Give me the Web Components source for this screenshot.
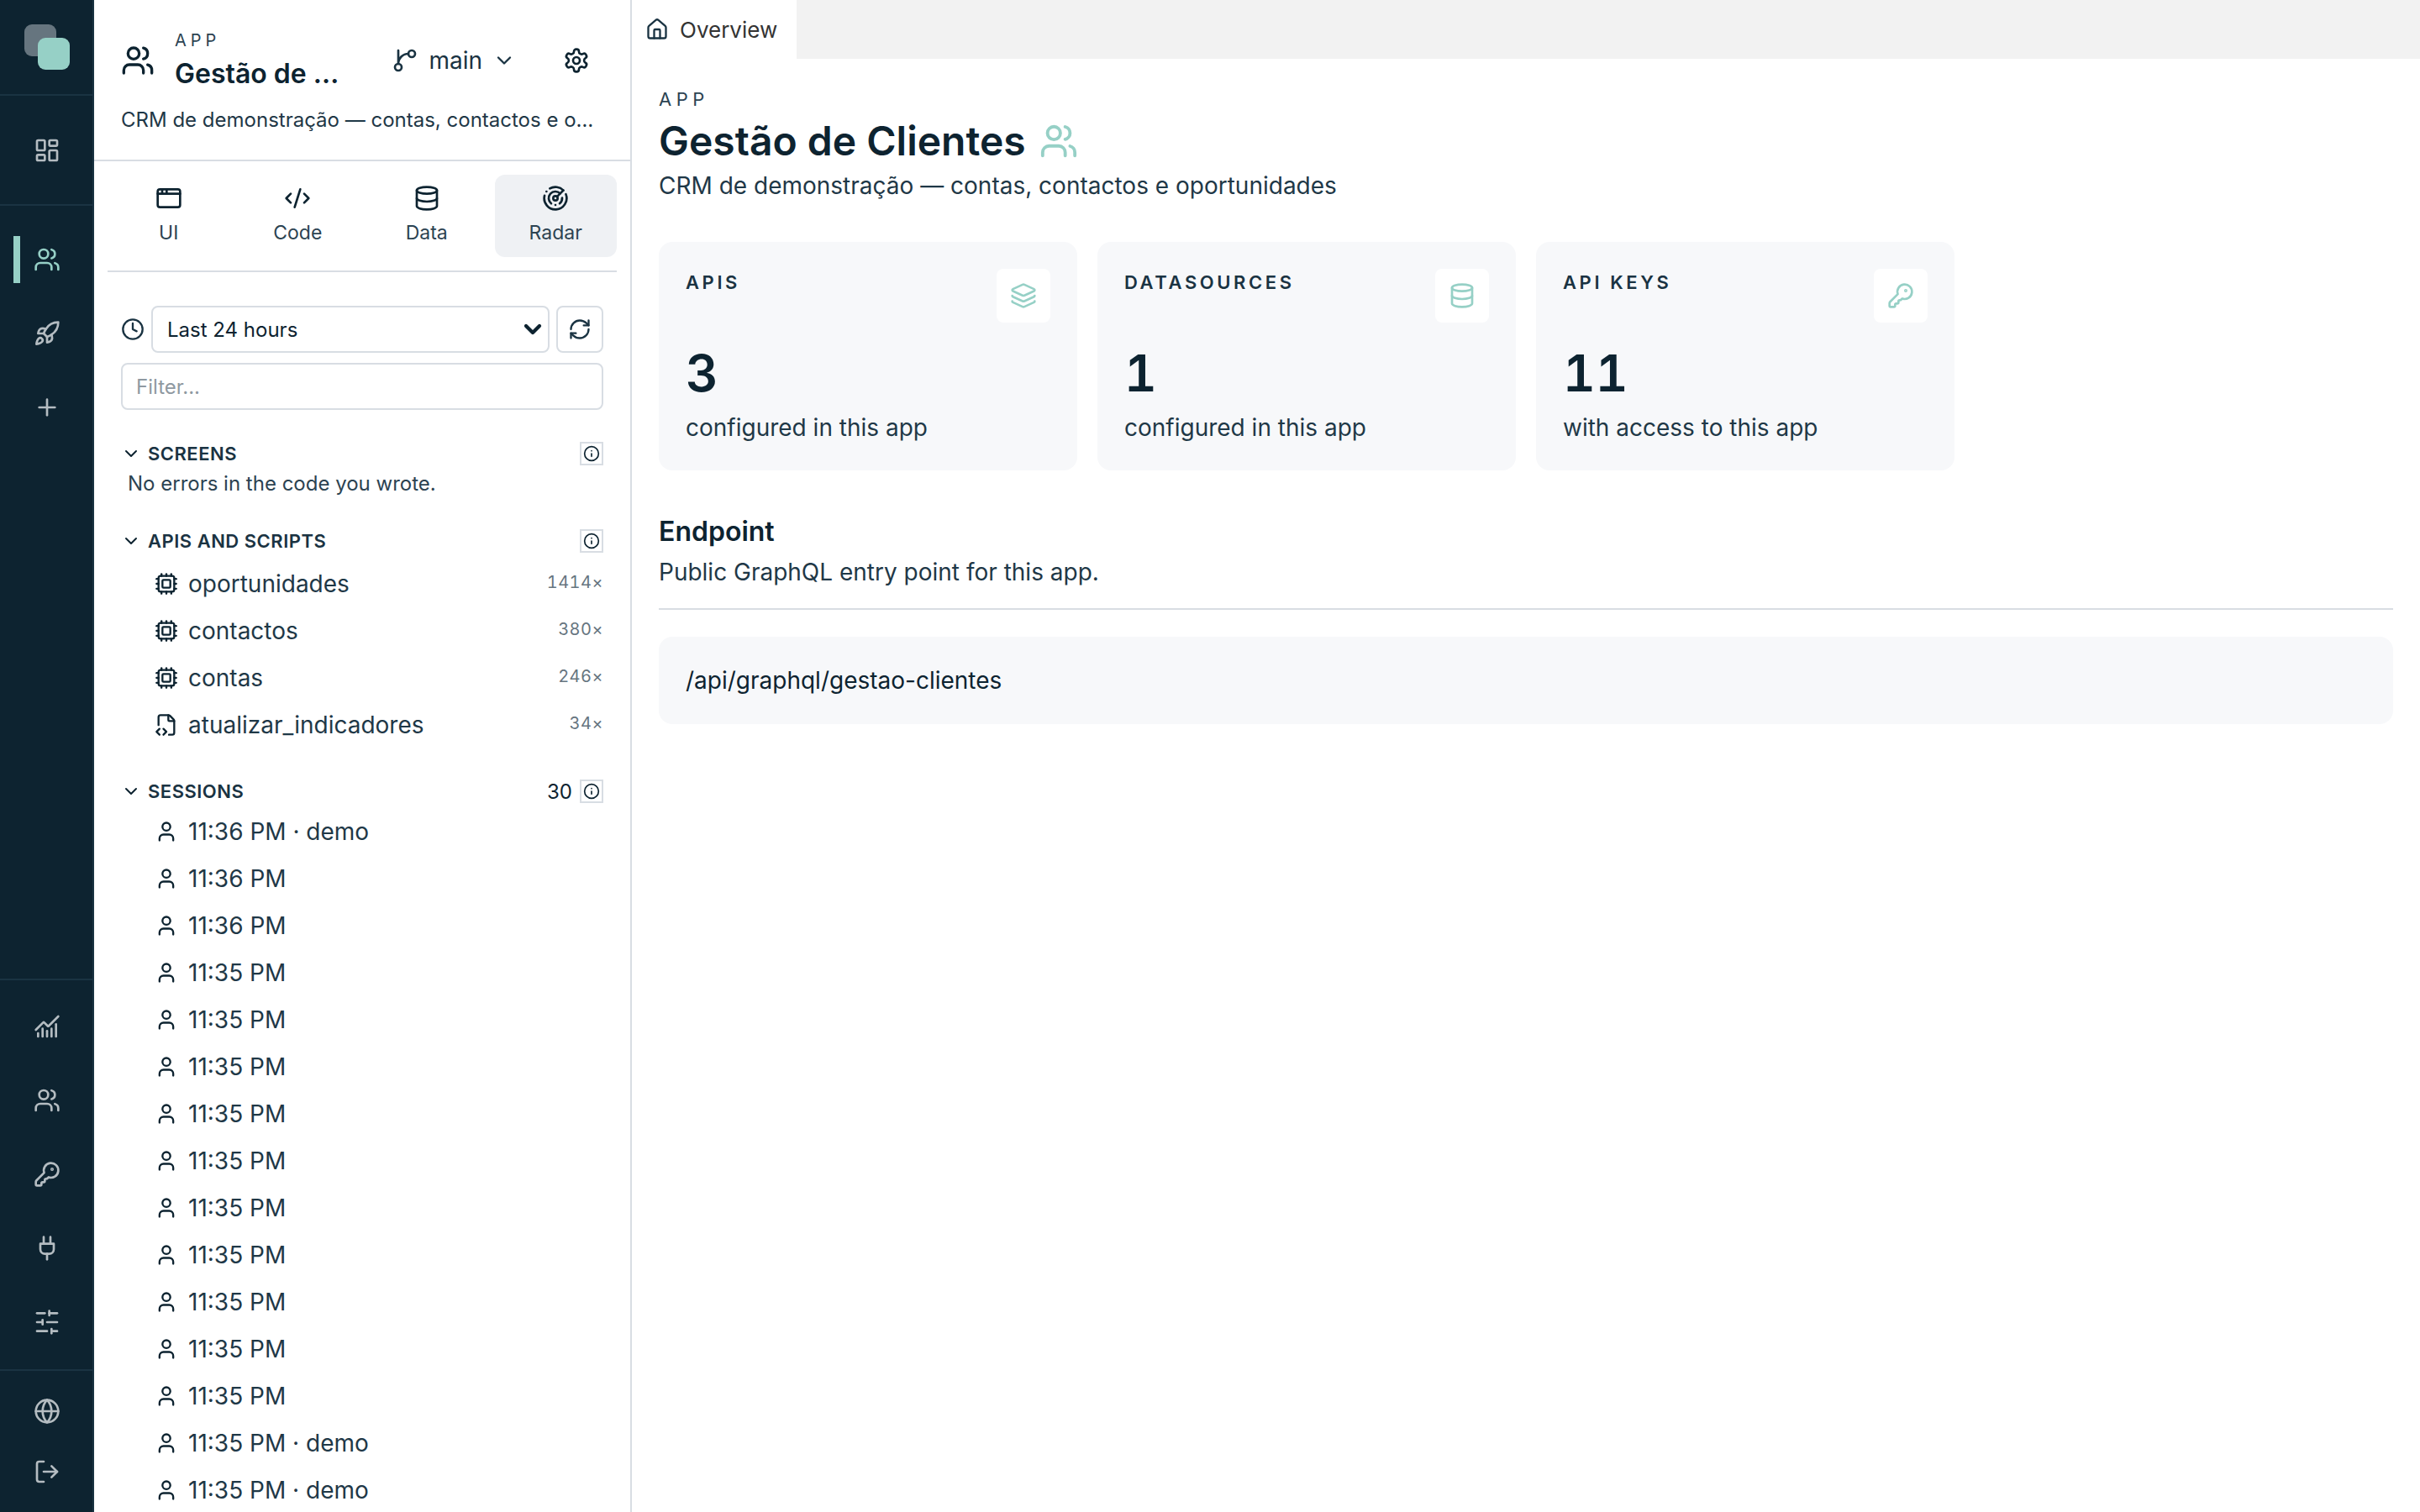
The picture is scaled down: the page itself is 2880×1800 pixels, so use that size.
<!DOCTYPE html>
<html lang="pt">
<head>
<meta charset="utf-8">
<title>Gestão de Clientes</title>
<style>
  html, body { margin: 0; height: 100%; background: #fff; }
  body {
    display: flex;
    height: 1800px;
    overflow: hidden;
    font-family: Inter, "Liberation Sans", sans-serif;
    color: #0d2330;
  }
</style>
</head>
<body>
<app-rail></app-rail>
<app-sidebar></app-sidebar>
<app-main></app-main>

<script>
const p = (...ds) => ds.map((d) => `<path d="${d}"/>`).join('');
const USERS = p('M16 21v-2a4 4 0 0 0-4-4H6a4 4 0 0 0-4 4v2', 'M22 21v-2a4 4 0 0 0-3-3.87', 'M16 3.13a4 4 0 0 1 0 7.75') + '<circle cx="9" cy="7" r="4"/>';
const ICONS = {
  dashboard: '<rect width="7" height="9" x="3" y="3" rx="1"/><rect width="7" height="5" x="14" y="3" rx="1"/><rect width="7" height="9" x="14" y="12" rx="1"/><rect width="7" height="5" x="3" y="16" rx="1"/>',
  users: USERS,
  rocket: p('M4.5 16.5c-1.5 1.26-2 5-2 5s3.74-.5 5-2c.71-.84.7-2.13-.09-2.91a2.18 2.18 0 0 0-2.91-.09z', 'm12 15-3-3a22 22 0 0 1 2-3.95A12.88 12.88 0 0 1 22 2c0 2.72-.78 7.5-6 11a22.35 22.35 0 0 1-4 2z', 'M9 12H4s.55-3.03 2-4c1.62-1.08 5 0 5 0', 'M12 15v5s3.03-.55 4-2c1.08-1.62 0-5 0-5'),
  plus: p('M5 12h14', 'M12 5v14'),
  chart: p('M12 16v5', 'M16 14v7', 'M20 10v11', 'm22 3-8.646 8.646a.5.5 0 0 1-.708 0L9.354 8.354a.5.5 0 0 0-.707 0L2 15', 'M4 18v3', 'M8 14v7'),
  key: p('M2.586 17.414A2 2 0 0 0 2 18.828V21a1 1 0 0 0 1 1h3a1 1 0 0 0 1-1v-1a1 1 0 0 1 1-1h1a1 1 0 0 0 1-1v-1a1 1 0 0 1 1-1h.172a2 2 0 0 0 1.414-.586l.814-.814a6.5 6.5 0 1 0-4-4z') + '<circle cx="16.5" cy="7.5" r=".5" fill="currentColor"/>',
  plug: p('M12 22v-5', 'M9 8V2', 'M15 8V2', 'M18 8v5a4 4 0 0 1-4 4h-4a4 4 0 0 1-4-4V8Z'),
  sliders: p('M21 4h-7', 'M10 4H3', 'M21 12h-9', 'M8 12H3', 'M21 20h-5', 'M12 20H3', 'M14 2v4', 'M8 10v4', 'M16 18v4'),
  world: '<circle cx="12" cy="12" r="10"/>' + p('M12 2a14.5 14.5 0 0 0 0 20 14.5 14.5 0 0 0 0-20', 'M2 12h20'),
  logout: p('m16 17 5-5-5-5', 'M21 12H9', 'M9 21H5a2 2 0 0 1-2-2V5a2 2 0 0 1 2-2h4'),
  branch: p('M15 6a9 9 0 0 0-9 9V3') + '<circle cx="18" cy="6" r="3"/><circle cx="6" cy="18" r="3"/>',
  chevron: p('m6 9 6 6 6-6'),
  settings: p('M12.22 2h-.44a2 2 0 0 0-2 2v.18a2 2 0 0 1-1 1.73l-.43.25a2 2 0 0 1-2 0l-.15-.08a2 2 0 0 0-2.73.73l-.22.38a2 2 0 0 0 .73 2.73l.15.1a2 2 0 0 1 1 1.72v.51a2 2 0 0 1-1 1.74l-.15.09a2 2 0 0 0-.73 2.73l.22.38a2 2 0 0 0 2.73.73l.15-.08a2 2 0 0 1 2 0l.43.25a2 2 0 0 1 1 1.73V20a2 2 0 0 0 2 2h.44a2 2 0 0 0 2-2v-.18a2 2 0 0 1 1-1.73l.43-.25a2 2 0 0 1 2 0l.15.08a2 2 0 0 0 2.73-.73l.22-.39a2 2 0 0 0-.73-2.73l-.15-.08a2 2 0 0 1-1-1.74v-.5a2 2 0 0 1 1-1.74l.15-.09a2 2 0 0 0 .73-2.73l-.22-.38a2 2 0 0 0-2.73-.73l-.15.08a2 2 0 0 1-2 0l-.43-.25a2 2 0 0 1-1-1.73V4a2 2 0 0 0-2-2z') + '<circle cx="12" cy="12" r="3"/>',
  browser: '<rect x="2" y="4" width="20" height="16" rx="2"/>' + p('M10 4v4', 'M2 8h20', 'M6 4v4'),
  code: p('m18 16 4-4-4-4', 'm6 8-4 4 4 4', 'm14.5 4-5 16'),
  database: '<ellipse cx="12" cy="5" rx="9" ry="3"/>' + p('M3 5V19A9 3 0 0 0 21 19V5', 'M3 12A9 3 0 0 0 21 12'),
  radar: p('M19.07 4.93A10 10 0 0 0 6.99 3.34', 'M4 6h.01', 'M2.29 9.62A10 10 0 1 0 21.31 8.35', 'M16.24 7.76A6 6 0 1 0 8.23 16.67', 'M12 18h.01', 'M17.99 11.66A6 6 0 0 1 15.77 16.67', 'm13.41 10.59 5.66-5.66') + '<circle cx="12" cy="12" r="2"/>',
  clock: '<circle cx="12" cy="12" r="10"/><polyline points="12 6 12 12 16 14"/>',
  refresh: p('M3 12a9 9 0 0 1 9-9 9.75 9.75 0 0 1 6.74 2.74L21 8', 'M21 3v5h-5', 'M21 12a9 9 0 0 1-9 9 9.75 9.75 0 0 1-6.74-2.74L3 16', 'M8 16H3v5'),
  info: '<circle cx="12" cy="12" r="10"/>' + p('M12 16v-4', 'M12 8h.01'),
  cpu: p('M12 20v2', 'M12 2v2', 'M17 20v2', 'M17 2v2', 'M2 12h2', 'M2 17h2', 'M2 7h2', 'M20 12h2', 'M20 17h2', 'M20 7h2', 'M7 20v2', 'M7 2v2') + '<rect x="4" y="4" width="16" height="16" rx="2"/><rect x="8" y="8" width="8" height="8" rx="1"/>',
  filecode: p('M4 12.15V4a2 2 0 0 1 2-2h8a2.4 2.4 0 0 1 1.706.706l3.588 3.588A2.4 2.4 0 0 1 20 8v12a2 2 0 0 1-2 2h-3.35', 'M14 2v5a1 1 0 0 0 1 1h5', 'm5 16-3 3 3 3', 'm9 22 3-3-3-3'),
  user: '<circle cx="12" cy="7" r="4"/>' + p('M19 21v-2a4 4 0 0 0-4-4H9a4 4 0 0 0-4 4v2'),
  home: p('M15 21v-8a1 1 0 0 0-1-1h-4a1 1 0 0 0-1 1v8', 'M3 10a2 2 0 0 1 .709-1.528l7-5.999a2 2 0 0 1 2.582 0l7 5.999A2 2 0 0 1 21 10v9a2 2 0 0 1-2 2H5a2 2 0 0 1-2-2z'),
  layers: p('M12.83 2.18a2 2 0 0 0-1.66 0L2.6 6.08a1 1 0 0 0 0 1.83l8.58 3.91a2 2 0 0 0 1.66 0l8.58-3.9a1 1 0 0 0 0-1.83z', 'M2 12a1 1 0 0 0 .58.91l8.6 3.91a2 2 0 0 0 1.65 0l8.58-3.9A1 1 0 0 0 22 12', 'M2 17a1 1 0 0 0 .58.91l8.6 3.91a2 2 0 0 0 1.65 0l8.58-3.9A1 1 0 0 0 22 17'),
};

class AppIcon extends HTMLElement {
  connectedCallback() {
    const size = this.getAttribute('size') || 32;
    const stroke = this.getAttribute('stroke') || 2;
    this.attachShadow({ mode: 'open' }).innerHTML = `
      <style>
        :host { display: inline-flex; flex: none; width: ${size}px; height: ${size}px; }
        svg { display: block; }
      </style>
      <svg width="${size}" height="${size}" viewBox="0 0 24 24" fill="none" stroke="currentColor"
        stroke-width="${stroke}" stroke-linecap="round" stroke-linejoin="round">${ICONS[this.getAttribute('name')]}</svg>`;
  }
}
customElements.define('app-icon', AppIcon);

class RailItem extends HTMLElement {
  connectedCallback() {
    this.attachShadow({ mode: 'open' }).innerHTML = `
      <style>
        :host { display: flex; align-items: center; justify-content: center; height: var(--item-h, 88px); position: relative; color: #b4bcc1; }
        :host([active]) { color: #96d0c6; }
        :host([active])::before {
          content: ''; position: absolute; left: 16px; top: 16px; width: 8px; height: 56px; background: #96d0c6;
        }
      </style>
      <app-icon name="${this.getAttribute('icon')}"></app-icon>`;
  }
}
customElements.define('rail-item', RailItem);

class AppRail extends HTMLElement {
  constructor() {
    super();
    this.attachShadow({ mode: 'open' }).innerHTML = `
      <style>
        :host {
          display: flex; flex-direction: column; flex: none;
          width: 112px; height: 1800px; background: #0d2330; box-shadow: inset -2px 0 0 #1a3342;
        }
        .logo { height: 112px; padding: 29px; box-sizing: border-box; }
        .logo svg { display: block; }
        .dash { height: 129px; padding-top: 21px; box-sizing: border-box; border-top: 2px solid #1a3342; border-bottom: 2px solid #1a3342; box-sizing: content-box; height: 108px; }
        .apps { padding-top: 20px; flex: 1; }
        .tools { border-top: 2px solid #1a3342; padding: 11px 0 12px; }
        .foot { border-top: 2px solid #1a3342; padding: 12px 0; --item-h: 72px; }
      </style>
      <div class="logo">
        <svg width="54" height="54" viewBox="0 0 54 54">
          <rect x="0" y="0" width="38" height="38" rx="9" fill="#66757f"/>
          <rect x="16" y="16" width="38" height="38" rx="9" fill="#96d0c6"/>
        </svg>
      </div>
      <div class="dash"><rail-item icon="dashboard"></rail-item></div>
      <div class="apps">
        <rail-item icon="users" active></rail-item>
        <rail-item icon="rocket"></rail-item>
        <rail-item icon="plus"></rail-item>
      </div>
      <div class="tools">
        <rail-item icon="chart"></rail-item>
        <rail-item icon="users"></rail-item>
        <rail-item icon="key"></rail-item>
        <rail-item icon="plug"></rail-item>
        <rail-item icon="sliders"></rail-item>
      </div>
      <div class="foot">
        <rail-item icon="world"></rail-item>
        <rail-item icon="logout"></rail-item>
      </div>`;
  }
}
customElements.define('app-rail', AppRail);

class SideTab extends HTMLElement {
  connectedCallback() {
    this.attachShadow({ mode: 'open' }).innerHTML = `
      <style>
        :host {
          display: flex; flex-direction: column; align-items: center; height: 98px; box-sizing: border-box;
          padding-top: 12px; border-radius: 12px; color: #0d2330; font-size: 23px; line-height: 34px;
        }
        :host([active]) { background: #eff1f4; }
        span { margin-top: 8px; color: #2c4352; }
      </style>
      <app-icon name="${this.getAttribute('icon')}"></app-icon>
      <span><slot></slot></span>`;
  }
}
customElements.define('side-tab', SideTab);

class SideSection extends HTMLElement {
  connectedCallback() {
    const count = this.getAttribute('count');
    this.attachShadow({ mode: 'open' }).innerHTML = `
      <style>
        :host { display: block; }
        header { display: flex; align-items: center; height: 28px; font-size: 22px; font-weight: 600; letter-spacing: .5px; color: #1a3342; text-transform: uppercase; }
        .chev { margin-right: 8px; color: #0d2330; }
        .title { flex: 1; }
        .count { font-size: 24px; font-weight: 400; letter-spacing: 0; margin-right: 9px; color: #0d2330; }
        .info { display: flex; align-items: center; justify-content: center; width: 24px; height: 24px; border: 2px solid #d8dde3; color: #0d2330; }
        .body { margin-top: var(--body-gap, 9px); }
      </style>
      <header>
        <app-icon class="chev" name="chevron" size="24"></app-icon>
        <span class="title">${this.getAttribute('title')}</span>
        ${count ? `<span class="count">${count}</span>` : ''}
        <span class="info"><app-icon name="info" size="20"></app-icon></span>
      </header>
      <div class="body"><slot></slot></div>`;
  }
}
customElements.define('side-section', SideSection);

class SideRow extends HTMLElement {
  connectedCallback() {
    const count = this.getAttribute('count');
    this.attachShadow({ mode: 'open' }).innerHTML = `
      <style>
        :host { display: flex; align-items: center; height: 56px; padding-left: 40px; gap: 12px; font-size: 28px; color: #1f3847; }
        app-icon { color: #0d2330; }
        .text { flex: 1; white-space: nowrap; }
        .count { font-size: 20px; letter-spacing: .5px; font-variant-numeric: tabular-nums; color: #66757f; margin-bottom: 4px; }
      </style>
      <app-icon name="${this.getAttribute('icon')}" size="28"></app-icon>
      <span class="text"><slot></slot></span>
      ${count ? `<span class="count">${count}</span>` : ''}`;
  }
}
customElements.define('side-row', SideRow);

class AppSidebar extends HTMLElement {
  constructor() {
    super();
    const sessions = [
      '11:36 PM · demo', '11:36 PM', '11:36 PM', '11:35 PM', '11:35 PM', '11:35 PM', '11:35 PM', '11:35 PM',
      '11:35 PM', '11:35 PM', '11:35 PM', '11:35 PM', '11:35 PM', '11:35 PM · demo', '11:35 PM · demo',
    ];
    this.attachShadow({ mode: 'open' }).innerHTML = `
      <style>
        :host {
          display: block; flex: none; box-sizing: border-box; width: 640px; height: 1800px;
          border-right: 2px solid #d8dde3; overflow: hidden; background: #fff;
        }
        .head { box-sizing: border-box; height: 192px; padding: 34px 0 0 32px; border-bottom: 2px solid #d8dde3; }
        .top { display: flex; align-items: center; height: 76px; padding-right: 48px; }
        .top .users { margin-right: 24px; }
        .names { flex: 1; min-width: 0; }
        .eyebrow { font-size: 20px; line-height: 24px; letter-spacing: 5px; color: #2c4352; }
        .name { margin-top: 8px; font-size: 32px; line-height: 40px; font-weight: 600; white-space: nowrap; }
        .branch { display: flex; align-items: center; margin-left: 56px; font-size: 28px; color: #1a3342; }
        .branch span { margin: 0 12px; }
        .gear { margin-left: 56px; }
        .desc { margin: 15px 32px 0 0; font-size: 24px; line-height: 36px; color: #1f3847; white-space: nowrap; }
        .tabs { display: grid; grid-template-columns: repeat(4, 1fr); gap: 8px; margin: 0 16px; padding: 16px 0; border-bottom: 2px solid #d8dde3; }
        .body { padding: 40px 32px 0; }
        .range { display: flex; align-items: center; gap: 8px; }
        .range .clock { color: #1a3342; }
        .pick { flex: 1; position: relative; display: flex; }
        select {
          flex: 1; appearance: none; height: 56px; box-sizing: border-box; margin: 0; padding: 0 0 0 17px;
          border: 2px solid #d8dde3; border-radius: 8px; background: #fff;
          font: 24px Inter, "Liberation Sans", sans-serif; color: #0d2330;
        }
        .pick app-icon { position: absolute; right: 4px; top: 12px; pointer-events: none; }
        .reload { display: flex; align-items: center; justify-content: center; box-sizing: border-box; width: 56px; height: 56px; border: 2px solid #d8dde3; border-radius: 8px; color: #1a3342; }
        input {
          display: block; width: 100%; height: 56px; box-sizing: border-box; margin: 12px 0 0; padding: 0 16px;
          border: 2px solid #d8dde3; border-radius: 8px; outline: none;
          font: 24px Inter, "Liberation Sans", sans-serif; color: #0d2330;
        }
        input::placeholder { color: #8f99a1; opacity: 1; }
        side-section { margin-top: 36px; }
        side-section.first { margin-top: 38px; }
        side-section.last { margin-top: 37px; }
        .empty { padding-left: 8px; font-size: 24px; line-height: 36px; color: #2c4352; }
      </style>
      <div class="head">
        <div class="top">
          <app-icon class="users" name="users" size="40"></app-icon>
          <div class="names">
            <div class="eyebrow">APP</div>
            <div class="name">Gestão de …</div>
          </div>
          <div class="branch">
            <app-icon name="branch"></app-icon>
            <span>main</span>
            <app-icon name="chevron" size="28"></app-icon>
          </div>
          <app-icon class="gear" name="settings"></app-icon>
        </div>
        <div class="desc">CRM de demonstração — contas, contactos e o…</div>
      </div>
      <div class="tabs">
        <side-tab icon="browser">UI</side-tab>
        <side-tab icon="code">Code</side-tab>
        <side-tab icon="database">Data</side-tab>
        <side-tab icon="radar" active>Radar</side-tab>
      </div>
      <div class="body">
        <div class="range">
          <app-icon class="clock" name="clock" size="28"></app-icon>
          <div class="pick">
            <select aria-label="Time range"><option>Last 24 hours</option></select>
            <app-icon name="chevron" size="32" stroke="3.2"></app-icon>
          </div>
          <div class="reload"><app-icon name="refresh" size="28"></app-icon></div>
        </div>
        <input placeholder="Filter...">
        <side-section class="first" title="Screens" style="--body-gap:4px">
          <div class="empty">No errors in the code you wrote.</div>
        </side-section>
        <side-section title="APIs and scripts">
          <side-row icon="cpu" count="1414×">oportunidades</side-row>
          <side-row icon="cpu" count="380×">contactos</side-row>
          <side-row icon="cpu" count="246×">contas</side-row>
          <side-row icon="filecode" count="34×">atualizar_indicadores</side-row>
        </side-section>
        <side-section class="last" title="Sessions" count="30" style="--body-gap:6px">
          ${sessions.map((s) => `<side-row icon="user">${s}</side-row>`).join('')}
        </side-section>
      </div>`;
  }
}
customElements.define('app-sidebar', AppSidebar);

class StatCard extends HTMLElement {
  connectedCallback() {
    this.attachShadow({ mode: 'open' }).innerHTML = `
      <style>
        :host { display: block; box-sizing: border-box; height: 272px; padding: 32px 32px 0; background: #f7f8fa; border-radius: 16px; }
        .top { display: flex; justify-content: space-between; align-items: flex-start; }
        .label { font-size: 22px; line-height: 32px; font-weight: 600; letter-spacing: 3.6px; color: #1a3342; }
        .tile { display: flex; align-items: center; justify-content: center; width: 64px; height: 64px; background: #fff; border-radius: 8px; color: #96d0c6; }
        .num { margin-top: 24px; font-size: 60px; line-height: 72px; font-weight: 600; font-variant-numeric: tabular-nums; color: #0d2330; }
        .sub { margin-top: 9px; font-size: 28px; line-height: 40px; color: #1f3847; }
      </style>
      <div class="top">
        <span class="label">${this.getAttribute('label')}</span>
        <span class="tile"><app-icon name="${this.getAttribute('icon')}"></app-icon></span>
      </div>
      <div class="num">${this.getAttribute('value')}</div>
      <div class="sub"><slot></slot></div>`;
  }
}
customElements.define('stat-card', StatCard);

class AppMain extends HTMLElement {
  constructor() {
    super();
    this.attachShadow({ mode: 'open' }).innerHTML = `
      <style>
        :host { display: block; flex: 1; min-width: 0; height: 1800px; }
        .bar { display: flex; height: 70px; background: #f2f2f2; }
        .tab { display: flex; align-items: center; gap: 13px; box-sizing: border-box; width: 196px; padding-left: 16px; background: #fff; font-size: 26px; color: #333; }
        .tab app-icon { color: #1a3342; }
        .page { padding: 33px 32px 0; }
        .eyebrow { font-size: 22px; line-height: 30px; letter-spacing: 5.5px; color: #2c4352; }
        h1 { display: flex; align-items: center; gap: 16px; margin: 5px 0 0; font-size: 48px; line-height: 60px; font-weight: 600; }
        h1 app-icon { color: #96d0c6; }
        .desc { margin-top: 3px; font-size: 28px; line-height: 40px; color: #1f3847; }
        .cards { display: grid; grid-template-columns: repeat(3, 498px); gap: 24px; margin-top: 47px; }
        h2 { margin: 51px 0 0; font-size: 32px; line-height: 44px; font-weight: 600; }
        .hint { margin-top: 6px; padding-bottom: 23px; font-size: 28px; line-height: 40px; color: #1f3847; border-bottom: 2px solid #d8dde3; }
        .box { margin-top: 32px; padding: 32px; background: #f7f8fa; border-radius: 16px; font-size: 28px; line-height: 40px; color: #0d2330; }
      </style>
      <div class="bar">
        <div class="tab"><app-icon name="home" size="28"></app-icon>Overview</div>
      </div>
      <div class="page">
        <div class="eyebrow">APP</div>
        <h1>Gestão de Clientes <app-icon name="users" size="46"></app-icon></h1>
        <div class="desc">CRM de demonstração — contas, contactos e oportunidades</div>
        <div class="cards">
          <stat-card label="APIS" icon="layers" value="3">configured in this app</stat-card>
          <stat-card label="DATASOURCES" icon="database" value="1">configured in this app</stat-card>
          <stat-card label="API KEYS" icon="key" value="11">with access to this app</stat-card>
        </div>
        <h2>Endpoint</h2>
        <div class="hint">Public GraphQL entry point for this app.</div>
        <div class="box">/api/graphql/gestao-clientes</div>
      </div>`;
  }
}
customElements.define('app-main', AppMain);
</script>
</body>
</html>
